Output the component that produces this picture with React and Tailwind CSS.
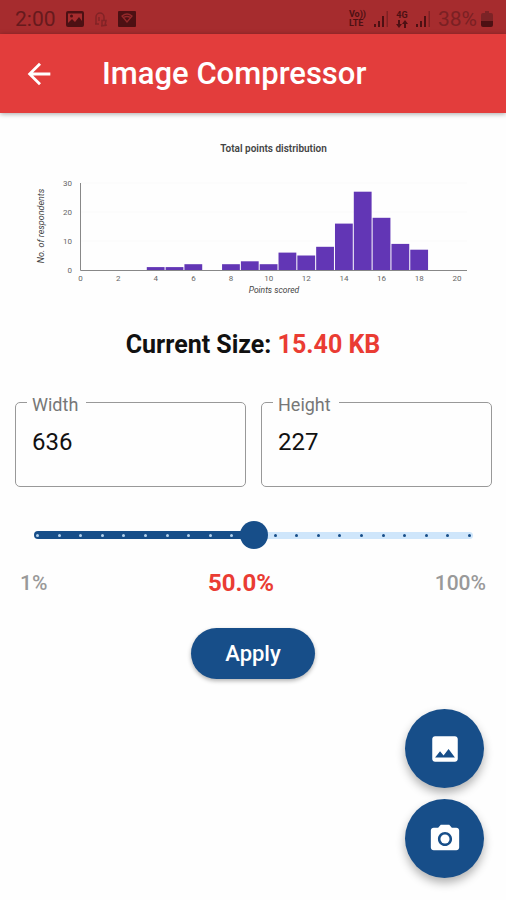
import { useState } from "react";

const bars = [
  [4, 1], [5, 1], [6, 2], [8, 2], [9, 3], [10, 2], [11, 6],
  [12, 5], [13, 8], [14, 16], [15, 27], [16, 18], [17, 9], [18, 7],
];

const xOf = (v) => 80.5 + v * 18.82;
const yOf = (v) => 157 - v * 2.9;

function SignalIcon() {
  return (
    <svg viewBox="0 0 16 18" className="h-[18px] w-4" aria-hidden="true">
      <path d="M1 14h2v3H1zM5 11h2v6H5zM9 6h2v11H9z" fill="#4d1013" />
      <path d="M13.5 1h1.5v16h-1.5z" fill="#7f2023" />
    </svg>
  );
}

function StatusBar() {
  return (
    <div className="flex h-[34px] items-center justify-between bg-[#a62c2e] pt-1 pr-[13px] pl-[15px] text-[#671a1d]">
      <div className="flex items-center gap-[10px]">
        <span className="text-[21px] leading-6">2:00</span>
        <svg viewBox="0 0 18 16" className="h-4 w-[18px]" aria-hidden="true">
          <path fillRule="evenodd" d="M2 0h14a2 2 0 0 1 2 2v12a2 2 0 0 1-2 2H2a2 2 0 0 1-2-2V2a2 2 0 0 1 2-2zM2 12l4-4 3 3 4-5 3 4V2.500H2zM5.500 3.500a1.500 1.500 0 1 1 0 3 1.500 1.500 0 0 1 0-3z" fill="#4d1013" />
        </svg>
        <svg viewBox="0 0 14 16" className="h-4 w-[14px]" fill="none" stroke="#822326" strokeWidth="1.500" aria-hidden="true">
          <path d="M2 13V6a4 4 0 0 1 8 0v3M1 13h4M5 6v4M8 9.500h4l-1 5H8zM7 15l6-1" />
        </svg>
        <svg viewBox="0 0 18 16" className="h-4 w-[18px]" aria-hidden="true">
          <rect width="18" height="16" rx="1" fill="#4d1013" />
          <path d="M4 5q5-4 10 0l-5 6zM5.500 6.500q3.500-2 7 0" fill="none" stroke="#94282a" strokeWidth="1.300" />
        </svg>
      </div>
      <div className="flex items-center gap-[7px]">
        <div className="flex flex-col text-[9px] leading-[9px] font-bold text-[#4d1013]">
          <span>Vo))</span>
          <span>LTE</span>
        </div>
        <SignalIcon />
        <div className="flex flex-col items-center text-[9px] leading-[9px] font-bold text-[#4d1013]">
          <span>4G</span>
          <svg viewBox="0 0 12 8" className="h-2 w-3" fill="#4d1013" aria-hidden="true">
            <path d="M2 0h2v4h2L3 8 0 4h2zM8 8h2V4h2L9 0 6 4h2z" />
          </svg>
        </div>
        <SignalIcon />
        <div className="flex items-center gap-1">
          <span className="text-[21px] leading-6 text-[#7a2023]">38%</span>
          <svg viewBox="0 0 12 16" className="h-4 w-3" aria-hidden="true">
            <path d="M4 0h4v2h2a2 2 0 0 1 2 2v6H0V4a2 2 0 0 1 2-2h2z" fill="#7c2326" />
            <path d="M0 10h12v4a2 2 0 0 1-2 2H2a2 2 0 0 1-2-2z" fill="#4d1013" />
          </svg>
        </div>
      </div>
    </div>
  );
}

function AppBar() {
  return (
    <header className="flex h-[79px] items-center gap-[47px] bg-[#e33d3c] pl-[23px] text-white shadow-[0_1px_5px_rgba(0,0,0,0.35)]">
      <button type="button" aria-label="Back" className="flex size-8 items-center justify-center">
        <svg viewBox="0 0 24 24" className="size-[34px] shrink-0" fill="currentColor" aria-hidden="true">
          <path d="M20 11H7.830l5.590-5.590L12 4l-8 8 8 8 1.410-1.410L7.830 13H20v-2z" />
        </svg>
      </button>
      <h1 className="text-[31px] leading-9 font-medium">Image Compressor</h1>
    </header>
  );
}

function Chart() {
  return (
    <svg viewBox="0 0 506 200" className="w-full" role="img" aria-label="Total points distribution" fontSize="8" fill="#666">
      <text x="273.500" y="38.500" textAnchor="middle" fontSize="10" fontWeight="600" fill="#444">Total points distribution</text>
      {[10, 20, 30].map((v) => (
        <path key={v} d={`M81 ${yOf(v)}H467`} stroke="#fafafa" />
      ))}
      {bars.map(([v, n]) => (
        <rect key={v} x={xOf(v) - 9} y={yOf(n)} width="17.800" height={n * 2.9} fill="#6236b5" />
      ))}
      <path d="M80.500 70V157.500H467" fill="none" stroke="#888" />
      {[0, 10, 20, 30].map((v) => (
        <text key={v} x="72" y={yOf(v) + 3} textAnchor="end">{v}</text>
      ))}
      {[0, 2, 4, 6, 8, 10, 12, 14, 16, 18, 20].map((v) => (
        <text key={v} x={xOf(v)} y="168" textAnchor="middle">{v}</text>
      ))}
      <text x="274" y="180" textAnchor="middle" fontStyle="italic" fontSize="8.500" fill="#444">Points scored</text>
      <text transform="translate(44 113) rotate(-90)" textAnchor="middle" fontStyle="italic" fontSize="9" fill="#444">No. of respondents</text>
    </svg>
  );
}

function Field({ id, label, initial }) {
  const [value, setValue] = useState(initial);
  return (
    <fieldset className="min-w-0 flex-1 rounded-[5px] border border-[#999] px-[11px] pt-[9px] pb-7">
      <legend className="pt-[6px] pr-2 pl-[5px] text-[18px] leading-6 text-[#777]">
        <label htmlFor={id}>{label}</label>
      </legend>
      <input
        id={id}
        type="text"
        inputMode="numeric"
        value={value}
        onChange={(e) => setValue(e.target.value)}
        className="block h-8 w-full px-[5px] text-[24px] leading-8 text-[#111] outline-none"
      />
    </fieldset>
  );
}

function QualitySlider({ value, onChange }) {
  return (
    <div className="mt-[34px] mr-[7px] ml-[8px] grid h-7 items-center">
      <div className="mx-[11px] flex h-2 items-center [grid-area:1/1]">
        <div className="h-2 rounded-l-full bg-[#174e89]" style={{ width: `${value}%` }} />
        <div className="h-[7px] flex-1 rounded-r-full bg-[#cfe6fb]" />
      </div>
      <div className="mx-[13px] flex items-center justify-between [grid-area:1/1]">
        {Array.from({ length: 21 }, (_, i) => (
          <span key={i} className={`size-[3px] rounded-full ${i * 5 < value ? "bg-[#b5d3ee]" : "bg-[#174e89]"}`} />
        ))}
      </div>
      <input
        type="range"
        aria-label="Quality"
        min="0"
        max="100"
        step="5"
        value={value}
        onChange={(e) => onChange(Number(e.target.value))}
        className="h-7 w-full appearance-none bg-transparent [grid-area:1/1] [&::-webkit-slider-thumb]:size-7 [&::-webkit-slider-thumb]:appearance-none [&::-webkit-slider-thumb]:rounded-full [&::-webkit-slider-thumb]:bg-[#174e89]"
      />
    </div>
  );
}

function Fab({ label, children }) {
  return (
    <button
      type="button"
      aria-label={label}
      className="flex size-[79px] items-center justify-center rounded-full bg-[#174e89] text-white shadow-[0_5px_10px_rgba(0,0,0,0.3)]"
    >
      <svg viewBox="0 0 24 24" className="size-[34px]" fill="currentColor" aria-hidden="true">
        {children}
      </svg>
    </button>
  );
}

export default function App() {
  const [quality, setQuality] = useState(50);
  return (
    <div className="min-h-screen bg-[#fefefe] font-[Roboto,sans-serif]">
      <StatusBar />
      <AppBar />
      <main className="flex flex-col pb-6">
        <Chart />
        <p className="mt-[18px] text-center text-[25px] leading-7 font-bold text-[#111]">
          Current Size: <span className="text-[#ea3c33]">15.40 KB</span>
        </p>
        <div className="mt-[28px] flex gap-[15px] pr-[14px] pl-[15px]">
          <Field id="width" label="Width" initial="636" />
          <Field id="height" label="Height" initial="227" />
        </div>
        <div className="px-[15px]">
          <QualitySlider value={quality} onChange={setQuality} />
        </div>
        <div className="mt-5 flex items-center justify-between px-5 text-[21px] leading-7 font-medium text-[#999]">
          <span>1%</span>
          <output className="text-[24px] font-bold text-[#ea3c33]">{quality.toFixed(1)}%</output>
          <span>100%</span>
        </div>
        <button
          type="button"
          className="mt-[31px] h-[51px] self-center rounded-full bg-[#174e89] px-[34px] text-[22px] leading-7 font-medium text-white shadow-[0_2px_4px_rgba(0,0,0,0.3)]"
        >
          Apply
        </button>
      </main>
      <div className="fixed right-[22px] bottom-[22px] flex flex-col gap-[11px]">
        <Fab label="Choose image">
          <path d="M21 19V5c0-1.100-.9-2-2-2H5c-1.100 0-2 .9-2 2v14c0 1.100.9 2 2 2h14c1.100 0 2-.9 2-2zM8.500 13.500l2.500 3.010L14.500 12l4.500 6H5l3.500-4.500z" />
        </Fab>
        <Fab label="Take photo">
          <circle cx="12" cy="12" r="3.200" />
          <path d="M9 2L7.170 4H4c-1.100 0-2 .9-2 2v12c0 1.100.9 2 2 2h16c1.100 0 2-.9 2-2V6c0-1.100-.9-2-2-2h-3.170L15 2H9zm3 15c-2.760 0-5-2.240-5-5s2.240-5 5-5 5 2.240 5 5-2.240 5-5 5z" />
        </Fab>
      </div>
    </div>
  );
}
